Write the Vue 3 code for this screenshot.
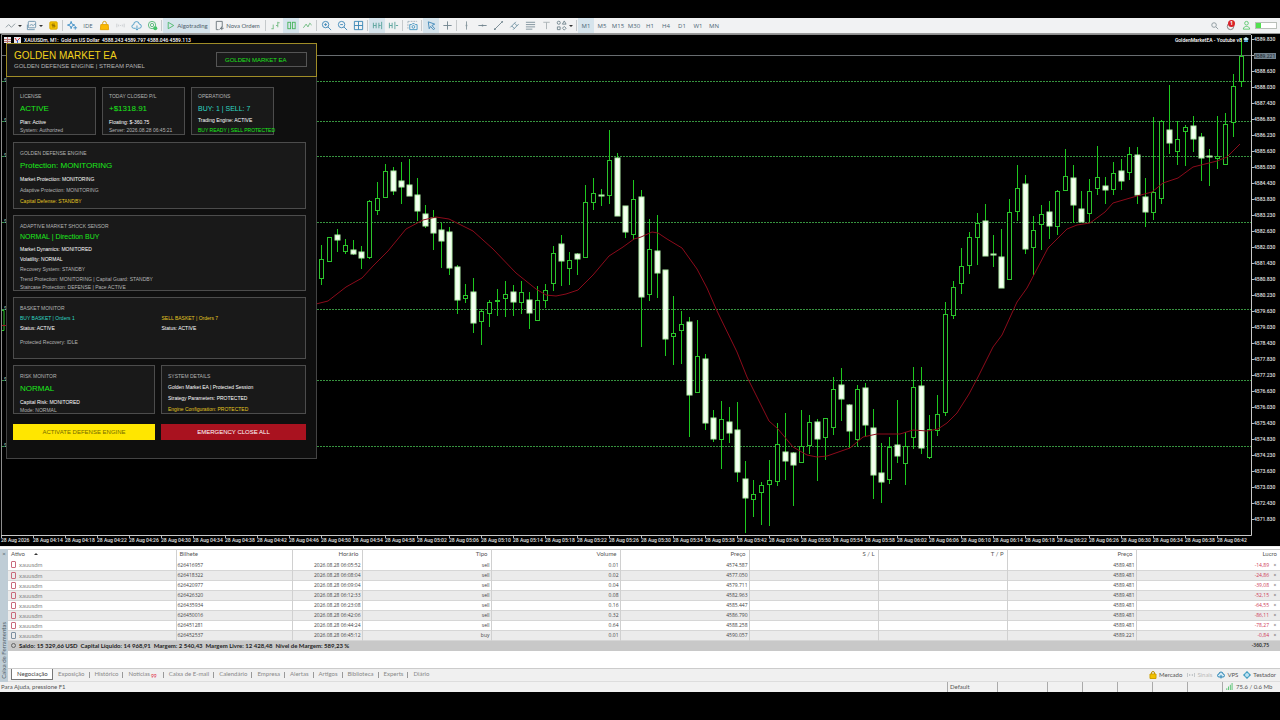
<script setup>
const timeframes = ['M1', 'M5', 'M15', 'M30', 'H1', 'H4', 'D1', 'W1', 'MN']

// x, high, body top, body bottom, low, filled
const raw = [
  [321, 245, 259, 278, 285, 0], [329, 237, 237, 261, 261, 0], [337, 229, 235, 240, 252, 1], [345, 239, 245, 251, 254, 0],
  [353, 240, 250, 254, 255, 1], [361, 246, 252, 258, 269, 1], [369, 200, 201, 257, 259, 0], [377, 182, 198, 210, 215, 0],
  [385, 164, 171, 197, 198, 0], [393, 167, 171, 191, 195, 1], [401, 162, 181, 187, 204, 1], [409, 159, 185, 196, 196, 1],
  [417, 178, 195, 211, 221, 1], [425, 205, 214, 226, 228, 1], [433, 210, 218, 233, 250, 1], [441, 223, 230, 241, 268, 1],
  [449, 227, 232, 268, 275, 1], [457, 265, 267, 300, 314, 1], [465, 284, 295, 298, 303, 0], [473, 278, 292, 323, 333, 1],
  [481, 309, 311, 321, 345, 0], [489, 300, 302, 313, 327, 0], [497, 289, 300, 301, 316, 0], [505, 281, 294, 298, 317, 0],
  [513, 285, 292, 302, 316, 1], [521, 281, 292, 302, 314, 0], [529, 292, 300, 313, 329, 1], [537, 286, 300, 320, 321, 0],
  [545, 284, 290, 300, 308, 0], [553, 246, 253, 283, 291, 0], [561, 235, 244, 261, 286, 1], [569, 252, 260, 268, 285, 0],
  [577, 253, 254, 259, 275, 1], [585, 185, 202, 257, 258, 0], [593, 178, 193, 202, 210, 0], [601, 189, 195, 196, 206, 1],
  [609, 130, 160, 195, 204, 0], [617, 153, 158, 216, 216, 1], [625, 206, 206, 232, 238, 1], [633, 180, 199, 234, 240, 0],
  [641, 190, 197, 297, 347, 1], [649, 219, 249, 294, 301, 0], [657, 215, 251, 273, 298, 1], [665, 270, 270, 339, 356, 1],
  [673, 296, 333, 336, 365, 0], [681, 311, 324, 330, 364, 0], [689, 317, 322, 395, 437, 1], [697, 320, 356, 392, 393, 0],
  [705, 354, 359, 423, 430, 1], [713, 410, 418, 439, 442, 1], [721, 401, 419, 439, 469, 0], [729, 407, 422, 433, 443, 1],
  [737, 402, 430, 472, 482, 1], [745, 461, 479, 498, 533, 1], [753, 480, 494, 499, 517, 0], [761, 482, 485, 492, 525, 0],
  [769, 460, 480, 484, 526, 0], [777, 423, 444, 481, 486, 0], [785, 413, 452, 461, 480, 1], [793, 452, 453, 465, 506, 1],
  [801, 410, 446, 462, 463, 0], [809, 415, 422, 445, 454, 0], [817, 419, 422, 439, 481, 1], [825, 418, 418, 437, 460, 0],
  [833, 377, 389, 427, 435, 0], [841, 368, 385, 399, 421, 1], [849, 404, 405, 431, 448, 1], [857, 385, 389, 439, 446, 0],
  [865, 383, 388, 425, 437, 1], [873, 409, 428, 475, 499, 1], [881, 443, 473, 482, 503, 1], [889, 437, 447, 479, 484, 0],
  [897, 400, 445, 456, 463, 1], [905, 432, 446, 463, 485, 0], [913, 367, 387, 437, 449, 0], [921, 367, 386, 448, 454, 1],
  [929, 415, 429, 457, 459, 0], [937, 395, 414, 430, 436, 0], [945, 302, 314, 412, 416, 0], [953, 281, 287, 315, 319, 0],
  [961, 248, 266, 283, 294, 0], [969, 232, 237, 265, 274, 0], [977, 213, 223, 237, 265, 0], [985, 204, 221, 256, 256, 1],
  [993, 235, 254, 255, 267, 1], [1001, 229, 257, 288, 288, 1], [1009, 199, 212, 279, 280, 0], [1017, 165, 188, 211, 221, 0],
  [1025, 175, 184, 249, 254, 1], [1033, 216, 230, 247, 275, 0], [1041, 205, 214, 224, 250, 0], [1049, 201, 212, 226, 239, 1],
  [1057, 190, 191, 226, 235, 0], [1065, 149, 176, 190, 191, 0], [1073, 165, 178, 205, 223, 1], [1081, 191, 209, 222, 222, 1],
  [1089, 179, 191, 213, 222, 0], [1097, 146, 177, 188, 195, 0], [1105, 177, 186, 190, 204, 1], [1113, 162, 173, 189, 195, 0],
  [1121, 159, 171, 181, 190, 1], [1129, 147, 154, 172, 180, 0], [1137, 147, 155, 195, 204, 1], [1145, 178, 197, 212, 227, 1],
  [1153, 117, 192, 212, 220, 0], [1161, 120, 121, 198, 204, 0], [1169, 85, 130, 143, 154, 1], [1177, 121, 139, 151, 165, 0],
  [1185, 125, 127, 131, 166, 0], [1193, 116, 126, 139, 152, 1], [1201, 133, 137, 158, 181, 1], [1209, 149, 156, 157, 186, 1],
  [1217, 116, 156, 158, 169, 0], [1225, 113, 124, 164, 165, 0], [1233, 74, 86, 122, 137, 0], [1241, 38, 56, 81, 87, 0]
]
const candles = raw.map(([x, high, top, bottom, low, filled]) => ({ x, high, top, bottom, low, filled }))

const levels = [81, 121, 156, 222, 309, 380, 446]
const average =
  '316,304 328,301 346,287 362,278 373,266 388,251 406,229 423,220 436,217 449,219 473,231 493,249 516,273 536,289 546,295 556,296 566,294 578,290 593,275 609,256 623,247 634,239 641,237 652,232 658,233 667,239 682,248 697,269 707,288 717,311 737,352 747,377 769,421 778,429 793,447 807,455 817,457 827,456 850,448 863,437 877,434 900,434 913,430 927,431 938,429 947,423 957,413 969,394 978,377 993,347 1002,335 1017,302 1027,288 1037,269 1048,248 1067,229 1077,225 1090,223 1105,212 1113,203 1137,196 1152,192 1163,183 1178,178 1193,167 1217,161 1227,157 1240,144'

const prices = Array.from({ length: 31 }, (_, i) => (i === 1 ? '4589.221' : (4589.83 - 0.6 * i).toFixed(3)))
const times = Array.from({ length: 39 }, (_, i) => {
  if (i === 0) return '28 Aug 2026'
  const m = 254 + 4 * (i - 1)
  return `28 Aug ${String(Math.floor(m / 60)).padStart(2, '0')}:${String(m % 60).padStart(2, '0')}`
})

const trades = [
  ['626416957', '06:05:52', 'sell', '0.01', '4574.587', '4589.481', '-14,89'],
  ['626418322', '06:08:04', 'sell', '0.02', '4577.050', '4589.481', '-24,86'],
  ['626420977', '06:09:04', 'sell', '0.04', '4579.711', '4589.481', '-39,08'],
  ['626426320', '06:12:33', 'sell', '0.08', '4582.963', '4589.481', '-52,15'],
  ['626435934', '06:23:08', 'sell', '0.16', '4585.447', '4589.481', '-64,55'],
  ['626450016', '06:42:06', 'sell', '0.32', '4586.790', '4589.481', '-86,11'],
  ['626451281', '06:44:24', 'sell', '0.64', '4588.258', '4589.481', '-78,27'],
  ['626452537', '06:45:12', 'buy', '0.01', '4590.057', '4589.221', '-0,84']
]
const tabs = ['Exposição', 'Histórico', 'Notícias', 'Caixa de E-mail', 'Calendário', 'Empresa', 'Alertas', 'Artigos', 'Biblioteca', 'Experts', 'Diário']
</script>

<template>
  <main class="terminal">
    <header class="toolbar">
      <button class="tool split" aria-label="Gráfico"><svg viewBox="0 0 12 12"><path d="M1 8l3-3 3 3 4-4" stroke="#8a979d" /></svg><i class="caret"></i></button>
      <button class="tool split" aria-label="Perfis"><svg viewBox="0 0 12 12"><rect x="2.5" y="1.5" width="8" height="7" rx="1" stroke="#6d94ad" /><path d="M1.500 5v5.500h8M4 6l2-1 2 1 2-2" stroke="#6d94ad" /></svg><i class="caret"></i></button>
      <button class="tool" aria-label="Cotações"><svg viewBox="0 0 12 12"><rect x="2" y="2" width="8" height="8" rx="1" fill="#f2c200" stroke="#d6a500" /><path d="M7.500 4.500h-3v1.500h3v1.500h-3" stroke="#8d6c00" /></svg></button>
      <i class="sep"></i>
      <button class="tool" aria-label="Navegador"><svg viewBox="0 0 12 12"><path d="M4.500 1.500l1 3 3 1-3 1-1 3-1-3-3-1 3-1zM9 6.500v4M7 8.500h4" stroke="#4290c6" /></svg></button>
      <button class="tool word">IDE</button>
      <button class="tool" aria-label="Mercado"><svg viewBox="0 0 12 12"><path d="M4 5V3.500a2 2 0 014 0V5" stroke="#d49a00" /><path d="M2 5h8l.5 5.500h-9z" fill="#fbb900" stroke="#e2a100" /></svg></button>
      <button class="tool" aria-label="Sinais"><svg viewBox="0 0 12 12"><path d="M2 4v4M4 5v2M8 5v2M10 4v4M6 5.500v1" stroke="#c9cdd0" /></svg></button>
      <button class="tool" aria-label="VPS"><svg viewBox="0 0 12 12"><path d="M5 9H3a2 2 0 010-4 3 3 0 016-.5A2.200 2.200 0 019 9H8M6.500 6v5M5 9.500L6.500 11 8 9.500" stroke="#4b9bc5" /></svg></button>
      <button class="tool" aria-label="Copiar"><svg viewBox="0 0 12 12"><circle cx="5.500" cy="5.500" r="4" stroke="#58b978" /><circle cx="5.500" cy="5.500" r="1.800" stroke="#58b978" /><circle cx="9" cy="9" r="2.200" fill="#45c46a" /></svg></button>
      <i class="sep"></i>
      <button class="tool wide on"><svg viewBox="0 0 12 12"><path d="M3.500 2.500l6 3.500-6 3.500z" stroke="#4cb96b" /></svg>Algotrading</button>
      <button class="tool wide order"><svg viewBox="0 0 12 12"><path d="M5 10.500H2.500v-9h6.500v6l-3 3M6.500 9h4M8.500 7v4" stroke="#6b767c" /></svg>Nova Ordem</button>
      <i class="sep"></i>
      <button class="tool" aria-label="Barras"><svg viewBox="0 0 12 12"><path d="M3.500 5v5M1.500 9.500h2M8.500 2v6M8.500 3h2M6.500 6h2" stroke="#75bb82" /></svg></button>
      <button class="tool on" aria-label="Velas"><svg viewBox="0 0 12 12"><rect x="2" y="2.500" width="3" height="7" stroke="#48b45c" /><rect x="7" y="2.500" width="3" height="7" stroke="#48b45c" /></svg></button>
      <button class="tool" aria-label="Linha"><svg viewBox="0 0 12 12"><path d="M1.500 8.500l3-4 2 3 2-4 2 2" stroke="#68b879" /></svg></button>
      <i class="sep"></i>
      <button class="tool" aria-label="Ampliar"><svg viewBox="0 0 12 12"><circle cx="5" cy="5" r="3.500" stroke="#3f88b8" /><path d="M7.500 7.500L11 11M3.500 5h3M5 3.500v3" stroke="#3f88b8" /></svg></button>
      <button class="tool" aria-label="Reduzir"><svg viewBox="0 0 12 12"><circle cx="5" cy="5" r="3.500" stroke="#3f88b8" /><path d="M7.500 7.500L11 11M3.500 5h3" stroke="#3f88b8" /></svg></button>
      <button class="tool" aria-label="Janelas"><svg viewBox="0 0 12 12"><path d="M1.500 1.500h9v9h-9zM6 1.500v9M1.500 6h9" stroke="#3985b5" /></svg></button>
      <i class="sep"></i>
      <button class="tool on" aria-label="Rolagem"><svg viewBox="0 0 12 12"><path d="M1.500 3v6M4.500 3v6M1.500 6h3M7.500 3v6M7.500 6h2M10.500 2v8" stroke="#5aa39b" /></svg></button>
      <button class="tool" aria-label="Deslocamento"><svg viewBox="0 0 12 12"><path d="M1.500 3v6M4.500 3v6M1.500 6h3M7.500 2v8M11 6H8.500" stroke="#5aa39b" /></svg></button>
      <i class="sep"></i>
      <button class="tool" aria-label="Captura"><svg viewBox="0 0 12 12"><path d="M1 1.500h10M1 1.500v8" stroke="#a5b4bd" stroke-dasharray="2 1" /><path d="M3 5h2l1-1h2l1 1h2v5.500H3z" stroke="#4596c2" /><circle cx="7" cy="7.500" r="1.500" stroke="#4596c2" /></svg></button>
      <i class="sep"></i>
      <button class="tool on" aria-label="Cursor"><svg viewBox="0 0 12 12"><path d="M2.500 2l7 2.500-3 1.500 3 3.500-1.500 1-3-3.500-1.500 2.500z" stroke="#3f88b8" /></svg></button>
      <button class="tool" aria-label="Mira"><svg viewBox="0 0 12 12"><path d="M6 1.500v9M1.500 6h9" stroke="#71848e" /></svg></button>
      <i class="sep"></i>
      <button class="tool" aria-label="Linha vertical"><svg viewBox="0 0 12 12"><path d="M6 1.500v9" stroke="#87979f" /><circle cx="6" cy="6" r="1" fill="#87979f" /></svg></button>
      <button class="tool" aria-label="Linha horizontal"><svg viewBox="0 0 12 12"><path d="M1.500 6h9" stroke="#71848e" /><circle cx="6" cy="6" r="1" fill="#71848e" /></svg></button>
      <button class="tool" aria-label="Tendência"><svg viewBox="0 0 12 12"><path d="M2 10l8-8" stroke="#71848e" /><circle cx="2" cy="10" r="1" fill="#71848e" /><circle cx="10" cy="2" r="1" fill="#71848e" /></svg></button>
      <button class="tool" aria-label="Canal"><svg viewBox="0 0 12 12"><path d="M1.500 8l6-6M4.500 10.500l6-6M3 6.500l3 3M6 3.500l3 3" stroke="#6f90a1" /></svg></button>
      <button class="tool" aria-label="Fibonacci"><svg viewBox="0 0 12 12"><path d="M1 2.500h10M1 5h10M1 7.500h10M1 10h7" stroke="#7d909a" /></svg></button>
      <button class="tool" aria-label="Texto"><svg viewBox="0 0 12 12"><path d="M2.500 2.500h7M6 2.500v7.500" stroke="#aab1b5" /></svg></button>
      <button class="tool split" aria-label="Formas"><svg viewBox="0 0 12 12"><circle cx="3" cy="3" r="1.700" stroke="#72858e" /><path d="M9 1l2 3.500H7zM1.500 7.500h3v3h-3zM9 7l2 2-2 2-2-2z" stroke="#72858e" /></svg><i class="caret"></i></button>
      <i class="sep"></i>
      <button v-for="(t, i) in timeframes" :key="t" class="tool word" :class="{ on: i === 0 }">{{ t }}</button>
      <div class="corner">
        <button class="tool" aria-label="Buscar"><svg viewBox="0 0 12 12"><circle cx="5.500" cy="5.500" r="2.500" stroke="#8b979d" /><path d="M7.500 7.500l2.500 2.500" stroke="#8b979d" /></svg></button>
        <button class="tool alert" aria-label="Avisos"><svg viewBox="0 0 12 12"><circle cx="6" cy="7" r="3.500" stroke="#777" /></svg><b>1</b></button>
        <button class="tool" aria-label="Conta"><svg viewBox="0 0 12 12"><circle cx="6" cy="3.500" r="2" stroke="#5cc96d" /><path d="M2.500 10c0-4 7-4 7 0z" stroke="#5cc96d" /></svg></button>
        <span class="battery"></span>
      </div>
    </header>

    <section class="chart">
      <svg class="plot" viewBox="0 34 1252 502" preserveAspectRatio="none">
        <path class="level" v-for="y in levels" :key="y" :d="`M2 ${y}.500H1251`" />
        <path d="M2 55.500H1251" stroke="#686d70" />
        <path d="M2 310.500h2v20h-2" class="hollow" />
        <path d="M2 325.500h4" stroke="#9b1420" />
        <g v-for="c in candles" :key="c.x">
          <path class="wick" :d="`M${c.x}.500 ${c.high}V${c.top}M${c.x}.500 ${c.bottom}V${c.low}`" />
          <rect v-if="c.filled" class="solid" :x="c.x - 2" :y="c.top" width="5" :height="c.bottom - c.top" />
          <rect v-else class="hollow" :x="c.x - 1.500" :y="c.top + 0.500" width="4" :height="c.bottom - c.top" />
        </g>
        <polyline :points="average" stroke="#8c0b1b" fill="none" />
        <path d="M1.500 536V34.500H1251" stroke="#8d8d8d" fill="none" />
        <path d="M1 535.500H1251.500V35" stroke="#c8c8c8" fill="none" />
      </svg>
      <ul class="prices">
        <li v-for="(p, i) in prices" :key="p" :class="{ current: i === 1 }"><span>{{ p }}</span></li>
      </ul>
      <ul class="times">
        <li v-for="t in times" :key="t">{{ t }}</li>
      </ul>

      <div class="caption">
        <svg viewBox="0 0 18 8"><rect x="0" y="1" width="7" height="6" fill="#e8e8ee" /><path d="M0 3.500h7M0 5.500h7M3.500 1v6" stroke="#b77" /><rect x="10" y="1" width="7" height="6" fill="#e8e8ee" /><path d="M11 2l2 3 3-3" stroke="#d33" fill="none" /><path d="M13.500 4v3" stroke="#36c" /></svg>
        <span>XAUUSDm, M1:&nbsp; Gold vs US Dollar&nbsp; 4588.243 4589.797 4588.046 4589.113</span>
      </div>
      <div class="expert">GoldenMarketEA - Youtube v8
        <svg viewBox="0 0 6 6"><path d="M0 2l3-2 3 2-3 2z" fill="#bfe6f7" /><path d="M1 3v2h4V3L3 4z" fill="#4aa8d8" /></svg>
      </div>
      <ul class="marks"><li v-for="y in levels" :key="y" :style="{ top: y - 40 + 'px' }">S</li></ul>

      <aside class="panel">
        <div class="head">
          <div>
            <h1>GOLDEN MARKET EA</h1>
            <p>GOLDEN DEFENSE ENGINE | STREAM PANEL</p>
          </div>
          <button class="brand">GOLDEN MARKET EA</button>
        </div>
        <div class="body">
          <div class="trio">
            <section class="card"><h2>LICENSE</h2><strong>ACTIVE</strong><p class="w up">Plan: Active</p><p>System: Authorized</p></section>
            <section class="card"><h2>TODAY CLOSED P/L</h2><strong>+$1318.91</strong><p class="w up">Floating: $-360.75</p><p>Server: 2026.08.28 06:45:21</p></section>
            <section class="card"><h2>OPERATIONS</h2><strong class="c7 cyan">BUY: 1 | SELL: 7</strong><p class="w">Trading Engine: ACTIVE</p><p class="g up">BUY READY | SELL PROTECTED</p></section>
          </div>
          <section class="card tall engine"><h2>GOLDEN DEFENSE ENGINE</h2><strong>Protection: MONITORING</strong><p class="w">Market Protection: MONITORING</p><p>Adaptive Protection: MONITORING</p><p class="y">Capital Defense: STANDBY</p></section>
          <section class="card tall sensor"><h2>ADAPTIVE MARKET SHOCK SENSOR</h2><strong class="c7">NORMAL | Direction BUY</strong><p class="w">Market Dynamics: MONITORED</p><p class="w">Volatility: NORMAL</p><p>Recovery System: STANDBY</p><p>Trend Protection: MONITORING | Capital Guard: STANDBY</p><p class="last">Staircase Protection: DEFENSE | Pace ACTIVE</p></section>
          <section class="card tall basket">
            <h2>BASKET MONITOR</h2>
            <div class="halves">
              <div><p class="cyan">BUY BASKET | Orders 1</p><p class="w">Status: ACTIVE</p></div>
              <div><p class="y">SELL BASKET | Orders 7</p><p class="w">Status: ACTIVE</p></div>
            </div>
            <p class="idle">Protected Recovery: IDLE</p>
          </section>
          <div class="duo">
            <section class="card tall"><h2>RISK MONITOR</h2><strong>NORMAL</strong><p class="w up">Capital Risk: MONITORED</p><p>Mode: NORMAL</p></section>
            <section class="card tall details"><h2>SYSTEM DETAILS</h2><p class="w">Golden Market EA | Protected Session</p><p class="w">Strategy Parameters: PROTECTED</p><p class="y">Engine Configuration: PROTECTED</p></section>
          </div>
          <div class="duo actions">
            <button class="activate">ACTIVATE DEFENSE ENGINE</button>
            <button class="emergency">EMERGENCY CLOSE ALL</button>
          </div>
        </div>
      </aside>
    </section>

    <section class="toolbox">
      <div class="rail"><button aria-label="Fechar">×</button><span>Caixa de Ferramentas</span></div>
      <div class="content">
        <table>
          <colgroup><col class="a" /><col class="b" /><col class="c" /><col v-for="n in 6" :key="n" class="d" /><col class="e" /></colgroup>
          <thead>
            <tr><th class="l">Ativo <i class="sort"></i></th><th class="l">Bilhete</th><th>Horário</th><th>Tipo</th><th>Volume</th><th>Preço</th><th>S / L</th><th>T / P</th><th>Preço</th><th class="profit">Lucro</th></tr>
          </thead>
          <tbody>
            <tr v-for="r in trades" :key="r[0]">
              <td class="l sym"><i class="doc" :class="r[2]"></i>xauusdm</td>
              <td class="l num">{{ r[0] }}</td><td>2026.08.28 {{ r[1] }}</td><td>{{ r[2] }}</td><td>{{ r[3] }}</td><td>{{ r[4] }}</td><td></td><td></td><td>{{ r[5] }}</td>
              <td class="profit"><span>{{ r[6] }}</span><button aria-label="Fechar posição">×</button></td>
            </tr>
          </tbody>
          <tfoot>
            <tr><td class="l" colspan="9"><i class="dot"></i>Saldo: 15 329,66 USD&nbsp; Capital Líquido: 14 968,91&nbsp; Margem: 2 540,43&nbsp; Margem Livre: 12 428,48&nbsp; Nível de Margem: 589,23 %</td><td class="total">-360,75</td></tr>
          </tfoot>
        </table>
        <nav class="tabs">
          <button class="tab active">Negociação</button>
          <button v-for="t in tabs" :key="t" class="tab">{{ t }}<sub v-if="t === 'Notícias'">99</sub></button>
          <div class="services">
            <a href="#"><svg viewBox="0 0 8 8"><path d="M2.500 3V2a1.500 1.500 0 013 0v1" stroke="#b98c00" fill="none" /><path d="M1 3h6v4.500H1z" fill="#f2c200" stroke="#cfa000" /></svg>Mercado</a>
            <a href="#" class="off"><svg viewBox="0 0 8 8"><path d="M.5 2v4M2.500 3v2M4 3.500v1M5.500 3v2M7.500 2v4" stroke="#c4c8ca" /></svg>Sinais</a>
            <a href="#"><svg viewBox="0 0 8 8"><path d="M2 6a1.500 1.500 0 010-3 2 2 0 014 0 1.500 1.500 0 010 3zM4 4v3.500" stroke="#2f86b4" fill="#cfe8f5" /></svg>VPS</a>
            <a href="#"><svg viewBox="0 0 8 8"><circle cx="4" cy="4" r="2.500" stroke="#2f94bd" fill="#bfe3f2" /><path d="M4 0v1.500M4 6.500V8M0 4h1.500M6.500 4H8" stroke="#2f94bd" /></svg>Testador</a>
          </div>
        </nav>
      </div>
    </section>

    <footer class="status">
      <span class="help">Para Ajuda, pressione F1</span>
      <span class="p1">Default</span><span class="p1"></span><span class="p2"></span><span class="p2"></span><span class="p2"></span><span class="p2"></span><span class="p2"></span>
      <span class="net"><svg viewBox="0 0 8 8"><path d="M1 6h1v2H1zM3 4h1v4H3zM5 2h1v6H5zM7 0h1v8H7z" fill="#4fc06a" /></svg>75.6 / 0.6 Mb</span>
    </footer>
  </main>
</template>

<style>
body { background: #000; }
</style>

<style scoped>
* { box-sizing: border-box; margin: 0; padding: 0; }
ul { list-style: none; }
button { font: inherit; color: inherit; background: none; border: 0; white-space: nowrap; }
.terminal { padding-top: 18px; font: 6px/10px Lato, "Open Sans", sans-serif; color: #555; }

.toolbar { display: flex; align-items: center; height: 16px; padding-left: 3px; background: #f1f2f3; border-bottom: 1px solid #9a9a9a; }
.tool { display: flex; align-items: center; justify-content: center; flex: none; width: 16px; height: 15px; color: #50616c; position: relative; }
.tool svg { width: 11px; height: 11px; fill: none; flex: none; }
.tool.split { width: 21px; }
.tool.wide { width: 47px; gap: 1px; font: 6px/10px Lato, sans-serif; }
.tool.order { width: 54px; }
.tool.word { font: 6px/10px "Open Sans", sans-serif; color: #4b6675; }
.tool.on { background: #d6e4ec; }
.caret { border: 2px solid transparent; border-top-color: #333; border-bottom: 0; margin-left: 2px; }
.sep { flex: none; width: 1px; height: 11px; margin: 0 1px; background: #c5c9cb; }
.corner { margin-left: auto; display: flex; align-items: center; padding-right: 3px; }
.alert b { position: absolute; left: 6px; top: 2px; width: 7px; height: 7px; border-radius: 4px; background: #d8232a; color: #fff; font: 700 5px/7px "Open Sans", sans-serif; text-align: center; }
.battery { width: 22px; height: 7px; margin-left: 1px; border: 1px solid #b9bfb9; background: linear-gradient(90deg, #52e04f 5px, #fff 5px); }

.chart { position: relative; display: grid; grid-template-columns: minmax(0, 1fr) 28px; background: #000; color: #e4e4e4; font: 500 5px/10px Roboto, "Open Sans", sans-serif; }
.plot { display: block; width: 100%; height: 502px; }
.level { stroke: #37933f; stroke-dasharray: 2 1; }
.wick { stroke: #1ec81e; fill: none; }
.hollow { stroke: #2cc42c; fill: #000; }
.solid { fill: #f4fff0; stroke: #b4efac; stroke-width: 1; }
.prices li { height: 11px; margin-bottom: 5px; line-height: 11px; display: flex; align-items: center; }
.prices li::before { content: ""; width: 2px; height: 1px; background: #bbb; }
.prices .current span { background: #75838f; color: #24303a; line-height: 6px; width: 22px; }
.times { grid-column: 1 / -1; display: grid; grid-template-columns: repeat(39, 32fr); padding-left: 1px; margin-right: 31px; height: 10px; }
.times li { white-space: nowrap; line-height: 9px; min-width: 0; background: linear-gradient(#bbb, #bbb) 0 0 / 1px 2px no-repeat; }
.caption { position: absolute; left: 4px; top: 1px; display: flex; gap: 2px; align-items: center; color: #fff; white-space: nowrap; }
.caption svg { width: 18px; height: 8px; }
.expert { position: absolute; right: 31px; top: 1px; color: #fff; white-space: nowrap; }
.expert svg { width: 6px; height: 6px; vertical-align: -1px; }
.marks li { position: absolute; left: 4px; color: #9bbf9b; }

.panel { position: absolute; left: 6px; top: 9px; width: 311px; height: 416px; background: #0f0f0f; border: 1px solid #444; font: 5px/8px "Liberation Sans", Arial, sans-serif; color: #b4b4b4; white-space: nowrap; }
.head { display: flex; justify-content: space-between; height: 34px; margin: -1px -1px 0; padding: 7px 9px 0 7px; background: #171717; border: 1px solid #a08d27; }
.head h1 { font-size: 10px; font-weight: 400; line-height: 10px; color: #f2d21c; }
.head p { font-size: 6px; line-height: 11px; }
.brand { align-self: flex-start; margin-top: 1px; width: 91px; height: 15px; border: 1px solid #555; color: #1de21d; font-size: 6px; text-align: left; padding-left: 8px; background: #1a1a1a; }
.body { padding: 10px 10px 0 6px; }
.card { border: 1px solid #4c4c4c; background: #191919; padding: 4px 6px 0; }
.card h2 { font-size: 5px; font-weight: 400; line-height: 8px; }
.card strong { display: block; font-weight: 400; font-size: 8px; line-height: 14px; padding-top: 2px; color: #1bea1b; }
.card .c7 { font-size: 7px; }
.card .w { color: #fff; }
.card .g { color: #1bea1b; }
.card .y { color: #e2c622; }
.card .cyan { color: #2ed8c4; }
.up { margin-top: 2px; }
.trio { display: grid; grid-template-columns: repeat(3, 83px); column-gap: 6px; }
.trio .card { height: 48px; }
.tall { padding-top: 6px; }
.engine { height: 67px; margin-top: 7px; }
.engine p, .details p { line-height: 11px; }
.engine strong { margin-bottom: 1px; }
.sensor { height: 76px; margin-top: 6px; }
.sensor strong { padding-top: 0; }
.sensor p { line-height: 10px; }
.sensor .last { line-height: 6px; }
.basket { height: 62px; margin-top: 6px; }
.basket p { line-height: 10px; }
.halves { display: grid; grid-template-columns: 1fr 1fr; column-gap: 4px; margin-top: 1px; }
.basket .idle { margin-top: 4px; }
.duo { display: grid; grid-template-columns: 142px 1fr; column-gap: 6px; margin-top: 6px; }
.duo .card { height: 49px; }
.details p:first-of-type { margin-top: 2px; }
.actions { margin-top: 10px; }
.actions button { height: 16px; font-size: 6px; }
.activate { background: #ffe600; color: #766a00; }
.emergency { background: #a9121f; color: #fff; }

.toolbox { display: flex; background: #fff; padding-top: 2px; border-top: 1px solid #f0f0f0; }
.rail { width: 8px; background: #bfcdd6; display: flex; flex-direction: column; justify-content: space-between; align-items: center; color: #4b5a64; padding-bottom: 3px; }
.rail span { writing-mode: vertical-rl; transform: rotate(180deg); line-height: 8px; white-space: nowrap; }
.content { flex: 1; min-width: 0; }
table { width: 100%; table-layout: fixed; border-collapse: collapse; border-top: 1px solid #ccc; }
.a { width: 168px; } .b { width: 116px; } .c { width: 70px; } .d { width: 129px; } .e { width: 144px; }
th, td { height: 10px; text-align: right; padding: 0 1px 0 0; white-space: nowrap; border-right: 1px solid #d0d0d0; line-height: 9px; }
th { font-weight: 400; color: #555; height: 11px; line-height: 8px; padding: 0 3px 2px 0; }
td { font: 5px/9px "Open Sans", sans-serif; color: #444; }
tbody tr { border-bottom: 1px solid #d6d6d6; }
tbody tr:nth-child(even) { background: #ebebeb; }
.l { text-align: left; }
th.l { padding-left: 3px; }
.num { padding-left: 1px; }
.sym { font: 6px/8px Lato, sans-serif; color: #888; }
.doc { display: inline-block; width: 5px; height: 7px; border: 1px solid #c96a7c; border-radius: 1px; margin: 0 3px; vertical-align: -1px; }
.doc.buy { border-color: #7d8fa0; }
.sort { display: inline-block; border: 2px solid transparent; border-bottom-color: #333; border-top: 0; margin-left: 7px; vertical-align: 1px; }
th.profit, td.profit { border-right: 0; }
td.profit { color: #cf3a56; }
.profit button { width: 8px; margin-left: 2px; color: #555; line-height: 8px; text-align: center; }
tfoot td { background: #c8c8c8; border: 0; color: #222; font-weight: 600; height: 10px; }
tfoot .l { font: 700 6px/9px Lato, sans-serif; }
.dot { display: inline-block; width: 5px; height: 5px; border: 1px solid #666; border-radius: 50%; margin: 0 3px; }
tfoot .total { padding-right: 11px; }
.tabs { display: flex; height: 14px; margin-top: 17px; padding-left: 3px; background: #f0f0f0; border-top: 1px solid #ccc; border-bottom: 1px solid #ddd; }
.tab { height: 11px; padding: 0 5px; color: #888; position: relative; }
.tab + .tab::after { content: ""; position: absolute; right: 0; top: 3px; height: 6px; border-right: 1px solid #999; }
.tab:nth-child(12)::after { display: none; }
.tab.active { width: 42px; background: #fff; color: #444; border: 1px solid #777; border-top: 0; }
.tab sub { font-size: 5px; line-height: 5px; color: #e02b44; margin: 0 2px 0 1px; vertical-align: -2px; }
.services { margin-left: auto; display: flex; gap: 5px; align-items: center; padding-right: 4px; }
.services a { display: flex; gap: 2px; align-items: center; color: #555; text-decoration: none; }
.services .off { color: #bbb; }
.services svg { width: 8px; height: 8px; }
.status { display: flex; height: 10px; background: #f1f1f1; color: #555; }
.status span { border-left: 1px solid #aaa; padding-left: 2px; line-height: 10px; }
.status .help { flex: 1; border: 0; padding-left: 1px; }
.p1 { width: 50px; } .p2 { width: 35px; }
.net { width: 58px; display: flex; align-items: center; gap: 3px; }
.net svg { width: 8px; height: 7px; }
</style>
